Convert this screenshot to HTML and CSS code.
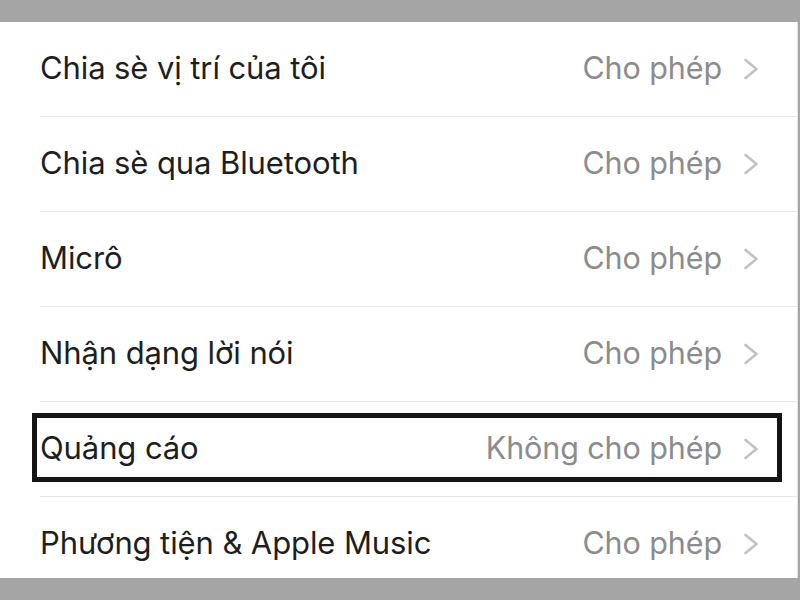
FILE: index.html
```html
<!DOCTYPE html>
<html lang="vi">
<head>
<meta charset="UTF-8" />
<meta name="viewport" content="width=device-width, initial-scale=1.0" />
<title>Quyền riêng tư</title>
<link rel="stylesheet" href="styles.css">
</head>
<body>
<div class="panel">
  <div class="row">
    <span class="label">Chia sè vị trí của tôi</span>
    <span class="value">Cho phép</span>
    <svg class="chevron" viewBox="0 0 14 22"><polyline points="1.5,2 12.5,11 1.5,20" /></svg>
  </div>
  <div class="row">
    <span class="label">Chia sè qua Bluetooth</span>
    <span class="value">Cho phép</span>
    <svg class="chevron" viewBox="0 0 14 22"><polyline points="1.5,2 12.5,11 1.5,20" /></svg>
  </div>
  <div class="row">
    <span class="label">Micrô</span>
    <span class="value">Cho phép</span>
    <svg class="chevron" viewBox="0 0 14 22"><polyline points="1.5,2 12.5,11 1.5,20" /></svg>
  </div>
  <div class="row">
    <span class="label">Nhận dạng lời nói</span>
    <span class="value">Cho phép</span>
    <svg class="chevron" viewBox="0 0 14 22"><polyline points="1.5,2 12.5,11 1.5,20" /></svg>
  </div>
  <div class="row marked">
    <span class="label">Quảng cáo</span>
    <span class="value">Không cho phép</span>
    <svg class="chevron" viewBox="0 0 14 22"><polyline points="1.5,2 12.5,11 1.5,20" /></svg>
  </div>
  <div class="row">
    <span class="label">Phương tiện &amp; Apple Music</span>
    <span class="value">Cho phép</span>
    <svg class="chevron" viewBox="0 0 14 22"><polyline points="1.5,2 12.5,11 1.5,20" /></svg>
  </div>
</div>
</body>
</html>
```

FILE: styles.css
```css
body {
  margin: 0;
  background: #a5a5a5;
  font-family: Inter, "Noto Sans", Arial, sans-serif;
}
.panel {
  margin-top: 22px;
  height: 556px;
  width: 797px;
  background: #fff;
  border-right: 1px solid #e4e4e4;
  overflow: hidden;
}
.row {
  position: relative;
  display: flex;
  align-items: center;
  height: 94px;
  padding: 0 39px 0 40px;
}
/* separator inset from the left like iOS lists */
.row + .row::before {
  content: "";
  position: absolute;
  top: -1px;
  left: 40px;
  right: 0;
  height: 1px;
  background: #e8e8e8;
}
.row + .row {
  margin-top: 1px;
}
.label {
  flex: 1;
  font-size: 31px;
  color: #1e1e1e;
  letter-spacing: -0.1px;
  margin-top: -3px;
}
.value {
  font-size: 30.5px;
  color: #8c8c8c;
  margin-right: 22px;
  letter-spacing: -0.1px;
  margin-top: -3px;
}
.chevron {
  width: 14px;
  height: 22px;
  fill: none;
  stroke: #c2c2c2;
  stroke-width: 2.6;
  stroke-linecap: round;
  stroke-linejoin: round;
}
/* highlight frame drawn over the ads row */
.row.marked::after {
  content: "";
  position: absolute;
  left: 32px;
  right: 15px;
  top: 11px;
  bottom: 14px;
  border: 5px solid #141414;
}
```
